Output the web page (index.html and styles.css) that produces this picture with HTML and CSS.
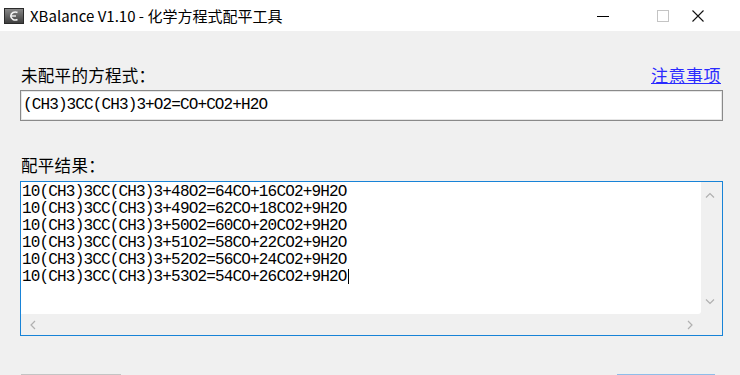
FILE: index.html
```html
<!DOCTYPE html>
<html lang="zh-CN">
<head>
    <meta charset="UTF-8">
    <title>XBalance V1.10 - 化学方程式配平工具</title>
    <link rel="stylesheet" href="styles.css">
</head>
<body>
    <div class="window">
        <div class="titlebar">
            <svg class="app-icon" width="20" height="16" viewBox="0 0 20 16">
                <defs>
                    <linearGradient id="ig" x1="0" y1="0" x2="0" y2="1">
                        <stop offset="0" stop-color="#8a8a8a"/>
                        <stop offset="1" stop-color="#3c3c3c"/>
                    </linearGradient>
                </defs>
                <rect x="0.5" y="0.5" width="19" height="15" fill="url(#ig)" stroke="#2a2a2a"/>
                <path d="M13.5 4.5 A4.5 4 0 1 0 13.5 11.5" fill="none" stroke="#f2f2f2" stroke-width="1.6"/>
                <path d="M6.5 8 H12" stroke="#f2f2f2" stroke-width="1.4"/>
            </svg>
            <span class="title">XBalance V1.10 - 化学方程式配平工具</span>
            <div class="controls">
                <span class="ctl">
                    <svg width="12" height="12" viewBox="0 0 12 12"><path d="M0 6.5 H12" stroke="#000" stroke-width="1"/></svg>
                </span>
                <span class="ctl">
                    <svg width="12" height="12" viewBox="0 0 12 12"><rect x="0.5" y="0.5" width="11" height="11" fill="none" stroke="#c4c4c4"/></svg>
                </span>
                <span class="ctl">
                    <svg width="12" height="12" viewBox="0 0 12 12"><path d="M0.5 0.5 L11.5 11.5 M11.5 0.5 L0.5 11.5" stroke="#111" stroke-width="1.1"/></svg>
                </span>
            </div>
        </div>

        <div class="main">
            <div class="field-head">
                <span class="label">未配平的方程式：</span>
                <a class="link" href="#">注意事项</a>
            </div>
            <div class="input">(CH3)3CC(CH3)3+O2=CO+CO2+H2O</div>

            <div class="label result-label">配平结果：</div>
            <div class="result">
                <div class="result-text">
                    <div>10(CH3)3CC(CH3)3+48O2=64CO+16CO2+9H2O</div>
                    <div>10(CH3)3CC(CH3)3+49O2=62CO+18CO2+9H2O</div>
                    <div>10(CH3)3CC(CH3)3+50O2=60CO+20CO2+9H2O</div>
                    <div>10(CH3)3CC(CH3)3+51O2=58CO+22CO2+9H2O</div>
                    <div>10(CH3)3CC(CH3)3+52O2=56CO+24CO2+9H2O</div>
                    <div>10(CH3)3CC(CH3)3+53O2=54CO+26CO2+9H2O<span class="caret"></span></div>
                </div>
                <div class="vscroll">
                    <svg width="10" height="6" viewBox="0 0 10 6"><path d="M1 5.5 L5 1.5 L9 5.5" fill="none" stroke="#b0b0b0" stroke-width="1.2"/></svg>
                    <svg width="10" height="6" viewBox="0 0 10 6"><path d="M1 0.5 L5 4.5 L9 0.5" fill="none" stroke="#b0b0b0" stroke-width="1.2"/></svg>
                </div>
                <div class="hscroll">
                    <svg width="6" height="10" viewBox="0 0 6 10"><path d="M5 1 L1 5 L5 9" fill="none" stroke="#b0b0b0" stroke-width="1.2"/></svg>
                    <svg width="6" height="10" viewBox="0 0 6 10"><path d="M1 1 L5 5 L1 9" fill="none" stroke="#b0b0b0" stroke-width="1.2"/></svg>
                </div>
                <div class="corner"></div>
            </div>

            <div class="buttons">
                <div class="btn"></div>
                <div class="btn primary"></div>
            </div>
        </div>
    </div>
</body>
</html>
```

FILE: styles.css
```css
body {
    margin: 0;
    width: 740px;
    height: 375px;
    overflow: hidden;
    background-color: #f0f0f0;
    font-family: "Noto Sans CJK SC", "Noto Sans", sans-serif;
}

.window {
    height: 375px;
    overflow: hidden;
}

.titlebar {
    height: 31px;
    background-color: white;
    display: flex;
    align-items: center;
}

.app-icon {
    margin-left: 4px;
    margin-top: 1px;
}

.title {
    margin-left: 6px;
    font-size: 15px;
    color: #000;
}

.controls {
    margin-left: auto;
    display: flex;
    height: 31px;
}

.ctl {
    width: 56px;
    display: flex;
    align-items: center;
    justify-content: center;
}

.ctl:last-child {
    width: 48px;
    justify-content: flex-start;
    padding-left: 1px;
}

.ctl:nth-child(1) {
    padding-right: 8px;
    width: 48px;
}

.main {
    padding: 33px 0 0 20px;
    width: 703px;
}

.field-head {
    display: flex;
    justify-content: space-between;
    align-items: flex-end;
    height: 22px;
}

.label {
    font-size: 16.5px;
    line-height: 22px;
    color: #000;
    letter-spacing: 0.3px;
    padding-left: 1px;
}

.link {
    font-size: 17px;
    line-height: 22px;
    color: #2a2aff;
    letter-spacing: 0.5px;
    margin-right: 2px;
}

.input {
    margin-top: 4px;
    height: 29px;
    border: 1px solid #8a8a8a;
    background-color: white;
    box-shadow: inset 0 0 0 1px #e6e6e6;
    font-family: "Liberation Mono", monospace;
    font-size: 16px;
    letter-spacing: -0.88px;
    line-height: 29px;
    padding-left: 2px;
    color: #000;
}

.result-label {
    margin-top: 33px;
}

.result {
    margin-top: 5px;
    height: 153px;
    border: 1px solid #1883d7;
    display: grid;
    grid-template-columns: 1fr 21px;
    grid-template-rows: 1fr 21px;
    background-color: #f0f0f0;
}

.result-text {
    background-color: white;
    border-bottom-right-radius: 3px;
    padding: 2px 0 0 1px;
    font-family: "Liberation Mono", monospace;
    font-size: 16px;
    letter-spacing: -0.83px;
    line-height: 17px;
    color: #000;
    overflow: hidden;
}

.caret {
    display: inline-block;
    width: 1px;
    height: 15px;
    background-color: #000;
    vertical-align: -3px;
    margin-left: 1px;
}

.vscroll {
    display: flex;
    flex-direction: column;
    align-items: center;
    justify-content: space-between;
    padding: 10px 3px 9px 0;
}

.hscroll {
    display: flex;
    align-items: center;
    justify-content: space-between;
    padding: 0 8px 0 9px;
}

.buttons {
    margin-top: 38px;
    display: flex;
    justify-content: space-between;
    padding: 0 8px 0 1px;
}

.btn {
    width: 98px;
    height: 24px;
    border: 1px solid #c4c4c4;
    background-color: #e1e1e1;
}

.btn.primary {
    border: 2px solid #8fbde9;
    width: 94px;
}
```
